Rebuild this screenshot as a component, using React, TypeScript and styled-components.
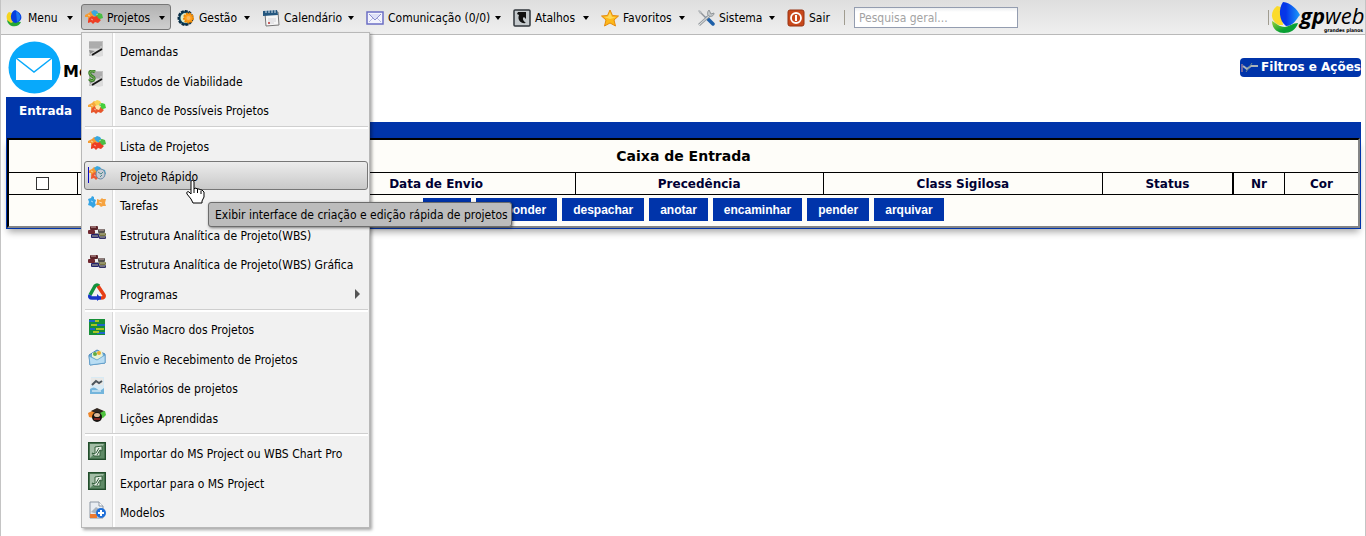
import React from "react";
import styled, { createGlobalStyle } from "styled-components";

const BLUE = "#0034aa";
const UI = `"DejaVu Sans Condensed", "DejaVu Sans", sans-serif`;
const WIDE = `"DejaVu Sans", sans-serif`;

const Global = createGlobalStyle`
  * { box-sizing: border-box; }
  body { margin: 0; background: #fff; color: #000; font: 12px ${UI}; }
  button, input { font: inherit; color: inherit; }
`;

const Page = styled.div`
  min-height: 100vh;
  border: solid #c4c4c4;
  border-width: 0 1px;
`;

const Toolbar = styled.nav`
  display: flex;
  align-items: center;
  height: 35px;
  padding-left: 1px;
  background: linear-gradient(#dedede, #efefef);
  border-bottom: 1px solid #b9b9b9;
`;

const ToolItem = styled.div<{ $w: number }>`
  position: relative;
  flex: none;
  width: ${(p) => p.$w}px;
`;

const ToolButton = styled.button<{ $active?: boolean }>`
  display: flex;
  align-items: center;
  width: calc(100% - 2px);
  height: 26px;
  padding: 2px 5px 0 3px;
  gap: 4px;
  white-space: nowrap;
  border: 1px solid ${(p) => (p.$active ? "#777" : "transparent")};
  border-radius: 3px;
  background: ${(p) => (p.$active ? "linear-gradient(#b2b2b2, #cfcfcf)" : "none")};
  svg { flex: none; }
`;

const Caret = styled.span`
  margin-left: auto;
  border: 3px solid transparent;
  border-top: 4px solid #000;
  border-bottom: 0;
`;

const Divider = styled.span`
  width: 1px;
  height: 15px;
  background: #a09c90;
`;

const Search = styled.input`
  width: 164px;
  height: 21px;
  margin: 0 auto 0 9px;
  padding: 1px 4px 0;
  border: 1px solid #949db0;
  background: linear-gradient(#eceef0, #fff 4px);
  &::placeholder { color: #a3a3a3; opacity: 1; }
`;

const Brand = styled.a`
  display: block;
  height: 34px;
  margin-left: 2px;
`;

const Menu = styled.div`
  position: absolute;
  z-index: 2;
  top: 28px;
  left: 0;
  width: 289px;
  padding: 3px 1px 0;
  border: 1px solid #b8b8b8;
  background: linear-gradient(90deg, #f1f1f1 30px, #d8d8d8 30px, #d8d8d8 31px, #fff 31px, #fff 33px, #f1f1f1 33px);
  box-shadow: 2px 2px 3px rgba(0, 0, 0, 0.35);
`;

const Group = styled.ul`
  margin: 0;
  padding: 0 0 0 1px;
  list-style: none;
`;

const Rule = styled.hr`
  height: 3px;
  margin: 1px 0 2px 2px;
  border: 0;
  border-top: 1px solid #cfcfcf;
  background: #fff;
`;

const Entry = styled.li`
  height: 30px;
  &:nth-child(even) { height: 29px; }
`;

const MenuButton = styled.button<{ $active?: boolean }>`
  display: flex;
  align-items: center;
  width: 100%;
  height: 100%;
  padding: 0 7px 0 3px;
  gap: 14px;
  text-align: left;
  white-space: nowrap;
  border: 1px solid ${(p) => (p.$active ? "#777" : "transparent")};
  border-radius: 3px;
  background: ${(p) => (p.$active ? "linear-gradient(#ececec, #c9c9c9)" : "none")};
  svg { flex: none; margin-bottom: 4px; }
  span { margin-top: 2px; }
`;

const SubArrow = styled.i`
  margin-left: auto;
  border: 5px solid transparent;
  border-left: 5px solid #555;
  border-right: 0;
`;

const Tooltip = styled.div`
  position: absolute;
  z-index: 3;
  top: 198px;
  left: 127px;
  padding: 2px 3px 0 6px;
  line-height: 21px;
  white-space: nowrap;
  border: 1px solid #6c6c6c;
  border-radius: 3px;
  background: #bcbcbc;
  box-shadow: 1px 1px 3px rgba(0, 0, 0, 0.5);
`;

const Pointer = styled.svg`
  position: absolute;
  z-index: 4;
  top: 175px;
  left: 104px;
`;

const Main = styled.main`
  padding: 2px 4px 0 5px;
`;

const Heading = styled.header`
  display: flex;
  align-items: center;
  height: 60px;
  padding-left: 2px;
  h1 {
    margin: 9px auto 0 2px;
    font: bold 16px ${WIDE};
  }
`;

const FilterButton = styled.button`
  display: flex;
  align-items: center;
  gap: 3px;
  height: 19px;
  padding: 0 0 0 1px;
  font: bold 12px ${WIDE};
  color: #fff;
  background: ${BLUE};
  border: 0;
  border-radius: 4px;
`;

const Tabs = styled.div`
  display: flex;
  border-bottom: 16px solid ${BLUE};
`;

const Tab = styled.button`
  height: 25px;
  padding: 2px 13px 0;
  font: bold 12px ${WIDE};
  color: #fff;
  background: ${BLUE};
  border: 0;
`;

const Panel = styled.section`
  border: solid ${BLUE};
  border-width: 0 1px 1px;
  box-shadow: 0 5px 7px -2px rgba(0, 0, 0, 0.35);
`;

const Grid = styled.table`
  width: 100%;
  table-layout: fixed;
  border: 2px solid #000;
  border-right-color: #858585;
  border-bottom-color: #858585;
  border-spacing: 0;
  background: #fefdf9;
  th, td { padding: 0; text-align: center; }
`;

const TitleCell = styled.th`
  height: 32px;
  font: bold 14px ${WIDE};
`;

const Column = styled.th`
  height: 23px;
  border: solid #000;
  border-width: 1px 1px 1px 0;
  font: bold 12px ${WIDE};
  color: #000033;
  &:nth-child(6) { border-right-width: 2px; }
  &:last-child { border-right: 0; }
  input {
    display: block;
    width: 13px;
    height: 13px;
    margin: 0 auto;
    appearance: none;
    border: 1px solid #333;
    background: #fff;
  }
`;

const Actions = styled.div`
  display: flex;
  justify-content: center;
  gap: 5px;
  height: 31px;
  padding-top: 3px;
`;

const Action = styled.button`
  height: 23px;
  padding: 0 11px;
  font: bold 12px "Liberation Sans", sans-serif;
  color: #fff;
  background: ${BLUE};
  border: 0;
`;

const Ico = ({ children, s = 18 }: { children: React.ReactNode; s?: number }) => (
  <svg width={s} height={s} viewBox="0 0 18 18" aria-hidden="true">{children}</svg>
);

const Drop = () => (
  <Ico>
    <path d="M3 3C-1 6 0 13 6 15L9 5Z" fill="#f6d51f" />
    <path d="M1 11c1 8 12 8 14 2l-6-1-4 2Z" fill="#27a836" />
    <path d="M9 1C4 3 3 12 9 14c8-1 9-9 0-13Z" fill="#063fe0" />
    <path d="M10 2c5 3 6 8 1 11Z" fill="#1d78f0" />
  </Ico>
);

const Puzzle = ({ a, b, c, d }: { a: string; b: string; c: string; d: string }) => (
  <>
    <path d="M0 6l4-2 2-2 2 1v3l3 1-2 4-3-1-3 1 0-3-3 0Z" fill={a} />
    <path d="M6 3l3-2 3 1 2 3-3 3-3-2Z" fill={b} />
    <path d="M11 5l3-1 3 1 1 4-3 1-1 3-3-2Z" fill={c} />
    <path d="M4 9l3-2 2 1 3-1 1 2 3 2-3 3-3-1-2 2-2-2-3 1 0-2Z" fill={d} />
    <path d="M3 6l2 1M11 6l2-1M6 10l2 1" stroke="#fff" opacity=".5" />
  </>
);
const Projects = () => <Ico><Puzzle a="#f59b32" b="#39a8df" c="#4bbd45" d="#ed3e24" /></Ico>;
const Bank = () => <Ico><Puzzle a="#f6a83c" b="#fbd253" c="#43cf3d" d="#e8562c" /><path d="M7 7l3-1 3 1-2 4-3-1Z" fill="#fde6a5" /></Ico>;

const Quick = () => (
  <Ico>
    <Puzzle a="#f59b32" b="#39a8df" c="#4aa9cf" d="#ed5b35" />
    <ellipse cx="12.500" cy="9" rx="4.500" ry="5" fill="#c7ccd6" stroke="#668ba8" />
    <path d="M10 7l3 2 2-2M12 12l2-2" stroke="#4d8c8b" fill="none" />
    <path d="M.5 2v16" stroke="#0a0ac0" />
  </Ico>
);

const Tasks = () => (
  <Ico>
    <path d="M0 5l3-1 1-2 2 1v2l2 1-1 3 1 2-3 3-2-2-3-1 1-3Z" fill="#35a4e4" />
    <path d="M9 5l3 1 2-2 1 1 3 0-1 4 1 3-3 0-2 1-2-2-3 0 1-3Z" fill="#f6a340" />
    <path d="M3 7l2 1M11 8l3 1" stroke="#fff" opacity=".6" />
  </Ico>
);

const Gear = () => (
  <Ico>
    <circle cx="8.500" cy="9" r="7" fill="#0d4664" stroke="#082b43" strokeWidth="2" strokeDasharray="3 1" />
    <circle cx="8.500" cy="9" r="5" fill="#dfeccb" />
    <circle cx="11.500" cy="9" r="4.500" fill="#ff9e1b" stroke="#ee8a08" strokeWidth="2" strokeDasharray="2 1" />
    <circle cx="11.500" cy="9" r="2" fill="#f8b95e" />
  </Ico>
);

const Calendar = () => (
  <Ico>
    <path d="M3 4l13-1 1 13-13 1Z" fill="#f6f6f6" stroke="#777" />
    <path d="M1 2l14-1 1 5-15 1Z" fill="#24577f" />
    <path d="M4 1v3M7 1v3M10 1v3M13 1v3" stroke="#d9e5ef" />
    <path d="M6 10h8M6 12h8M6 14h6" stroke="#d4d4d8" />
    <circle cx="7" cy="14" r="1" fill="#b33" />
  </Ico>
);

const Mail = () => (
  <Ico>
    <rect x="1" y="3" width="16" height="12" fill="#f3f4fd" stroke="#6b6ec4" strokeWidth="1.500" />
    <path d="M3 13l4-4M15 13l-4-4" stroke="#b6b9e4" />
    <path d="M3 5l6 6 6-6" fill="#dde0f7" stroke="#8a8dce" />
  </Ico>
);

const Shortcut = () => (
  <Ico>
    <rect x="1" y="1" width="16" height="16" rx="1" fill="#c4c9cc" stroke="#30363b" strokeWidth="1.500" />
    <path d="M5 3h8v7l-2-2c-2 1-1 4 2 6-5 1-9-3-7-8L4 5Z" fill="#111" />
  </Ico>
);

const Star = () => (
  <Ico>
    <path d="M9 1l2.500 5.500 6 .5-4.500 4 1.500 6L9 14l-5.500 3L5 11 .5 7l6-.5Z" fill="#fdb91a" stroke="#e58a0c" />
    <path d="M9 3l2 5 4 .5-6 1.500-6-2 4-.5Z" fill="#ffd95a" />
  </Ico>
);

const Tools = () => (
  <Ico>
    <path d="M2 2l8 8" stroke="#8d9298" strokeWidth="1.500" />
    <path d="M10 9l6 6" stroke="#1d5fa8" strokeWidth="3.500" strokeLinecap="round" />
    <path d="M2 16L13 6" stroke="#9a9fa3" strokeWidth="3" />
    <path d="M2 16L13 6" stroke="#e4e7e8" />
    <path d="M12 1c-2 2-2 5 0 6s5 0 5-3l-3 1-1-2Z" fill="#c4c8ca" stroke="#8f9497" />
    <path d="M1 1l3 1 1 2-2 1Z" fill="#b6babd" />
  </Ico>
);

const Power = () => (
  <Ico>
    <rect x="1" y="1" width="16" height="16" rx="2" fill="#c8481b" stroke="#963212" />
    <circle cx="9" cy="9" r="5" fill="none" stroke="#fff" strokeWidth="1.800" />
    <path d="M9 6v6" stroke="#fff" strokeWidth="2" />
  </Ico>
);

const Doc = ({ money }: { money?: boolean }) => (
  <Ico>
    <path d="M1 1h14v15H1Z" fill="#c2c2c2" />
    <path d="M1 3h13M1 5h13M1 7h11" stroke="#979797" />
    <path d="M1 9h14v7l-5 1-9-3Z" fill="#dcdcdc" />
    <path d="M1 10l6 1-5 3Z" fill="#8f8f8f" />
    <path d="M4 15l10-6" stroke="#161616" strokeWidth="2" />
    {money && (
      <>
        <path d="M7 2C4 0 1 1 2 4s5 2 4 5-4 1-5 0" fill="none" stroke="#3b7f2b" strokeWidth="3" />
        <path d="M7 2C4 0 1 1 2 4s5 2 4 5-4 1-5 0" fill="none" stroke="#83bd62" />
      </>
    )}
  </Ico>
);

const Wbs = () => (
  <Ico>
    <path d="M5 5v5h9V7" fill="none" stroke="#333" />
    <rect x="2" y="2" width="8" height="4" rx="1" fill="#5b2429" />
    <rect x="0" y="6" width="7" height="4" rx="1" fill="#6f2830" />
    <rect x="10" y="5" width="7" height="4" rx="1" fill="#54514e" />
    <path d="M3 3h5M11 6h5" stroke="#c9aaa8" />
    <rect x="3" y="10" width="8" height="4" rx="1" fill="#24246e" />
    <rect x="11" y="9" width="7" height="3" rx="1" fill="#77753e" />
    <rect x="11" y="12" width="7" height="3" rx="1" fill="#34336a" />
    <path d="M4 12h6M12 10h5M12 13h5" stroke="#b4b497" />
  </Ico>
);

const Triangle = () => (
  <Ico>
    <path d="M2 12L7 3q2-2 4 0" fill="none" stroke="#12933d" strokeWidth="3.500" />
    <path d="M10 3l6 9q1 3-3 3" fill="none" stroke="#e63f17" strokeWidth="3.500" />
    <path d="M13 15H4q-3 0-2-3" fill="none" stroke="#1737c8" strokeWidth="3.500" />
    <path d="M9 11l4 4-4 3Z" fill="#1737c8" />
  </Ico>
);

const Macro = () => (
  <Ico>
    <path d="M1 1h16v16H1Z" fill="#168f37" />
    <path d="M1 3h6M9 7h8M2 11h5M9 15h8" stroke="#1d65c9" strokeWidth="2" />
    <path d="M7 3h4M3 7h6M8 11h8M5 14h6" stroke="#a9c427" strokeWidth="2" />
  </Ico>
);

const Envelope = () => (
  <Ico>
    <path d="M1 7l8-5 8 4v9l-15 2Z" fill="#69addb" stroke="#4b87b8" />
    <path d="M4 5l10-3 1 7-6 3-5-3Z" fill="#e8f2d8" />
    <circle cx="7" cy="6" r="2" fill="#62ab42" />
    <circle cx="11" cy="5" r="2" fill="#e9ad31" />
    <path d="M1 8l8 4 8-5v8l-15 2Z" fill="#b9ddf3" stroke="#5a9bc9" strokeWidth=".7" />
  </Ico>
);

const Report = () => (
  <Ico>
    <path d="M3 0h13v17H2Z" fill="#d8eaf4" />
    <path d="M3 1h12v7H3Z" fill="#e8e8e6" />
    <path d="M4 8l4-4 3 2 3-2" fill="none" stroke="#4b555c" strokeWidth="2" />
    <path d="M2 12q4-3 7 0t7-1v6H2Z" fill="#74b5dc" />
    <path d="M4 14h9" stroke="#fff" />
  </Ico>
);

const Lessons = () => (
  <Ico>
    <path d="M0 6l6-3 3 4-4 4-4-1Z" fill="#ed852a" />
    <path d="M11 4l6 0 1 4-3 3-4-1Z" fill="#4fc33f" />
    <path d="M3 4l6-3 7 3-6 3Z" fill="#30251e" />
    <circle cx="9" cy="10" r="5" fill="#171310" />
    <ellipse cx="9" cy="8" rx="3" ry="2" fill="#d9b99b" />
    <path d="M6 12h6" stroke="#a52820" strokeWidth="1.500" />
  </Ico>
);

const Project = () => (
  <Ico>
    <rect x=".7" y=".7" width="16.600" height="16.600" fill="#5e8a66" stroke="#234d2c" strokeWidth="1.400" />
    <path d="M2 2h14L2 16Z" fill="#a3bda6" />
    <path d="M4 11l3 1V5l7-1v5l-2-1v6H6Z" fill="#e7efe6" stroke="#35603d" />
    <path d="M8 11l3-5M9 13l3-5" stroke="#35603d" />
  </Ico>
);

const Models = () => (
  <Ico>
    <path d="M2 1h9l4 4v12H2Z" fill="#e9edf2" stroke="#8c96a3" />
    <path d="M11 1v4h4" fill="#fff" stroke="#8c96a3" />
    <path d="M3 11l5-5 5 3-4 4Z" fill="#aab4bf" />
    <path d="M2 13h7v4H2Z" fill="#ee7a2f" />
    <circle cx="13" cy="12" r="5" fill="#1f6fd8" />
    <path d="M13 9v6M10 12h6" stroke="#fff" strokeWidth="2" />
  </Ico>
);

const Logo = () => (
  <svg width="94" height="34" viewBox="0 0 94 34" role="img" aria-label="gpweb grandes planos">
    <defs>
      <linearGradient id="drop" x1="0" x2="1"><stop offset=".3" stopColor="#0636e8" /><stop offset="1" stopColor="#1d9bfa" /></linearGradient>
      <linearGradient id="leaf" x1="0" x2="1" y2="1"><stop stopColor="#9ad335" /><stop offset=".6" stopColor="#09a034" /></linearGradient>
    </defs>
    <path d="M6 6C-1 11-1 21 8 25h4L10 7Z" fill="#fbdb2c" />
    <path d="M1 21c0 9 7 12 12 12 6 0 12-3 14-10-5 0-8 3-13 4C8 27 5 23 1 21Z" fill="url(#leaf)" />
    <path d="M12 2C7 9 8 21 15 26c8 0 10-7 14-11C26 9 20 3 12 2Z" fill="url(#drop)" />
    <text x="29" y="24" fontFamily="Open Sans" fontStyle="italic" fontWeight="700" fontSize="22">gp</text>
    <text x="54" y="24" fontFamily="Open Sans" fontStyle="italic" fontWeight="400" fontSize="22">web</text>
    <text x="53" y="32" fontFamily="DejaVu Sans Condensed" fontWeight="bold" fontSize="5">grandes planos</text>
  </svg>
);

const groups: [string, React.ReactNode][][] = [
  [["Demandas", <Doc />], ["Estudos de Viabilidade", <Doc money />], ["Banco de Possíveis Projetos", <Bank />]],
  [
    ["Lista de Projetos", <Projects />],
    ["Projeto Rápido", <Quick />],
    ["Tarefas", <Tasks />],
    ["Estrutura Analítica de Projeto(WBS)", <Wbs />],
    ["Estrutura Analítica de Projeto(WBS) Gráfica", <Wbs />],
    ["Programas", <Triangle />],
  ],
  [
    ["Visão Macro dos Projetos", <Macro />],
    ["Envio e Recebimento de Projetos", <Envelope />],
    ["Relatórios de projetos", <Report />],
    ["Lições Aprendidas", <Lessons />],
  ],
  [["Importar do MS Project ou WBS Chart Pro", <Project />], ["Exportar para o MS Project", <Project />], ["Modelos", <Models />]],
];

const ProjectsMenu = () => (
  <Menu>
    {groups.map((items, i) => (
      <React.Fragment key={i}>
        {i > 0 && <Rule />}
        <Group>
          {items.map(([label, icon]) => (
            <Entry key={label}>
              <MenuButton $active={label === "Projeto Rápido"}>
                {icon}
                <span>{label}</span>
                {label === "Programas" && <SubArrow />}
              </MenuButton>
            </Entry>
          ))}
        </Group>
      </React.Fragment>
    ))}
  </Menu>
);

const tools: [string, number, React.ReactNode][] = [
  ["Menu", 79, <Drop />],
  ["Projetos", 92, <Projects />],
  ["Gestão", 85, <Gear />],
  ["Calendário", 104, <Calendar />],
  ["Comunicação (0/0)", 147, <Mail />],
  ["Atalhos", 88, <Shortcut />],
  ["Favoritos", 96, <Star />],
  ["Sistema", 90, <Tools />],
  ["Sair", 61, <Power />],
];

const columns: [string, string][] = [
  ["", "5.1%"],
  ["De", "16.3%"],
  ["Data de Envio", "20.6%"],
  ["Precedência", "18.4%"],
  ["Class Sigilosa", "20.7%"],
  ["Status", "9.7%"],
  ["Nr", "3.8%"],
  ["Cor", "5.4%"],
];

const actions = ["criar", "responder", "despachar", "anotar", "encaminhar", "pender", "arquivar"];

export default function App() {
  return (
    <Page>
      <Global />
      <Toolbar>
        {tools.map(([label, w, icon]) => (
          <ToolItem key={label} $w={w}>
            <ToolButton $active={label === "Projetos"}>
              {icon}
              {label}
              {label !== "Sair" && <Caret />}
            </ToolButton>
            {label === "Projetos" && (
              <>
                <ProjectsMenu />
                <Tooltip role="tooltip">Exibir interface de criação e edição rápida de projetos</Tooltip>
                <Pointer width="20" height="26" viewBox="0 0 20 26" aria-hidden="true">
                  <path
                    d="M6 2c1-1 3-1 3 1v7l1-1 3 1 1 0 2 1 1 0 2 2v5l-2 4v2H8l-2-4-4-5c-1-2 1-3 2-2l2 2Z"
                    fill="#fff"
                    stroke="#000"
                    strokeLinejoin="round"
                  />
                  <path d="M9 10v4M12.500 10v4M16 12v3" stroke="#000" />
                </Pointer>
              </>
            )}
          </ToolItem>
        ))}
        <Divider />
        <Search type="search" placeholder="Pesquisa geral..." aria-label="Pesquisa geral" />
        <Divider />
        <Brand href="#"><Logo /></Brand>
      </Toolbar>
      <Main>
        <Heading>
          <svg width="53" height="53" viewBox="0 0 53 53" aria-hidden="true">
            <circle cx="26.500" cy="26.500" r="26" fill="#08a9fb" />
            <path d="M8 17h36v22H8Z" fill="#fff" />
            <path d="M8 17l18 14 18-14" fill="none" stroke="#08a9fb" strokeWidth="1.500" />
          </svg>
          <h1>Mensagens</h1>
          <FilterButton>
            <svg width="17" height="13" viewBox="0 0 17 13" aria-hidden="true">
              <path d="M1 3v8" stroke="#d99" />
              <path d="M2 5l4 3 4-3h7" fill="none" stroke="#a9b3bb" strokeWidth="2" />
              <path d="M5 11l6-9" stroke="#6f8b8f" />
            </svg>
            Filtros e Ações
          </FilterButton>
        </Heading>
        <Tabs><Tab>Entrada</Tab></Tabs>
        <Panel>
          <Grid>
            <colgroup>
              {columns.map(([name, w]) => <col key={name} width={w} />)}
            </colgroup>
            <thead>
              <tr><TitleCell colSpan={8}>Caixa de Entrada</TitleCell></tr>
              <tr>
                {columns.map(([name]) => (
                  <Column key={name}>
                    {name || <input type="checkbox" aria-label="Selecionar todas" />}
                  </Column>
                ))}
              </tr>
            </thead>
            <tbody>
              <tr>
                <td colSpan={8}>
                  <Actions>{actions.map((a) => <Action key={a}>{a}</Action>)}</Actions>
                </td>
              </tr>
            </tbody>
          </Grid>
        </Panel>
      </Main>
    </Page>
  );
}
